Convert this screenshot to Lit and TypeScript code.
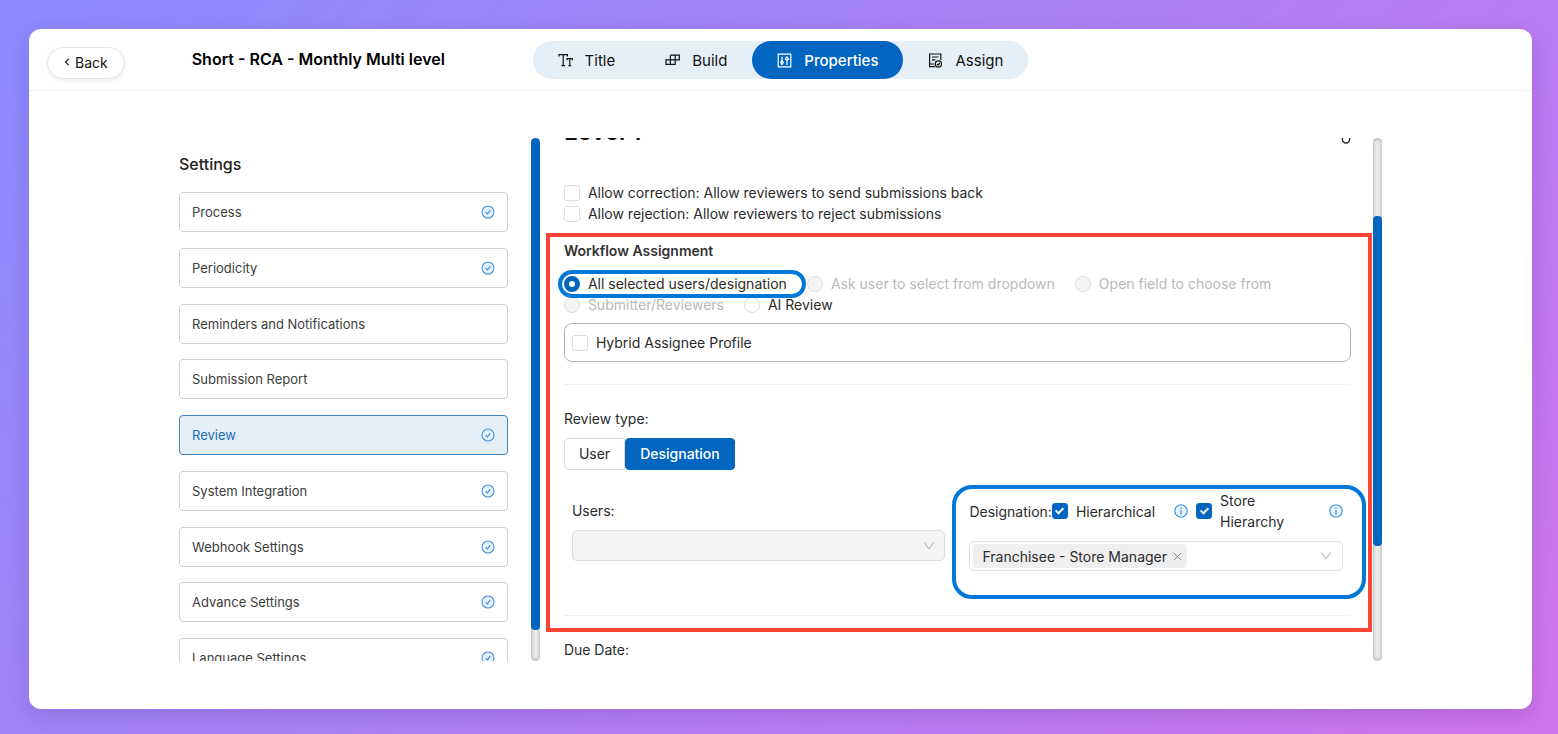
import { LitElement, html, css, svg, nothing } from "lit";
import { customElement, property } from "lit/decorators.js";
import { classMap } from "lit/directives/class-map.js";

const checkCircle = html`<svg class="check" viewBox="0 0 14 14" width="14" height="14" aria-hidden="true">
  <circle cx="7" cy="7" r="6" fill="#e6f4ff" stroke="#4a90dd" stroke-width="1.1" />
  <path d="M4.6 7.1 6.4 8.9 9.3 5.1" fill="none" stroke="#3d86d8" stroke-width="1.1" />
</svg>`;

const infoCircle = html`<svg viewBox="0 0 14 14" width="14" height="14" role="img" aria-label="More information">
  <circle cx="7" cy="7" r="6.2" fill="#e6f4ff" stroke="#3f8ee0" stroke-width="1.1" />
  <path d="M7 6v4.4" stroke="#3f8ee0" stroke-width="1.2" />
  <circle cx="7" cy="4.1" r=".8" fill="#3f8ee0" />
</svg>`;

const chevron = html`<svg class="chevron" viewBox="0 0 12 12" width="12" height="12" aria-hidden="true">
  <path d="M1.3 2.6 6 8.9l4.7-6.3" fill="none" stroke="#bcbcbc" stroke-width="1.1" />
</svg>`;

const tabIcons = {
  title: svg`<path d="M1 3.6V1.6h8.4v2M5.2 1.6v11M3.4 12.6H7M9 7.2V5.6h5.6v1.6M11.8 5.6v7M10.4 12.6h2.8" />`,
  build: svg`<path d="M5.4 2.2h8.9v4.6H1v4.6h9.2V2.2M5.4 2.2v9.2M10.2 6.8h4.1" />`,
  properties: svg`<path d="M1.2 1.2h12.6v12.6H1.2z" /><path d="M5 3.8v4M5 11v.9M10 7v4.9" /><path d="M5 7.6 6.3 9.4 5 11 3.7 9.4z" /><path d="M10 3.8 11.6 6 10 7 8.4 6z" />`,
  assign: svg`<path d="M7 13.6H1.6V1h11.2v6M4 4h6.4M4 6.8h3.4M1.6 11h4.6" /><circle cx="10.4" cy="11" r="3.1" /><path d="m9 11 1.1 1.1 1.8-2.1" />`,
};

type TabIcon = keyof typeof tabIcons;

@customElement("app-header")
class AppHeader extends LitElement {
  private tabs: { label: string; icon: TabIcon; active?: boolean }[] = [
    { label: "Title", icon: "title" },
    { label: "Build", icon: "build" },
    { label: "Properties", icon: "properties", active: true },
    { label: "Assign", icon: "assign" },
  ];

  static styles = css`
    :host {
      display: grid;
      grid-template-columns: 1fr auto 1fr;
      align-items: center;
      padding: 12px 18px 11px;
      border-bottom: 1px solid #efefef;
    }
    .lead {
      display: flex;
      align-items: center;
      gap: 67px;
    }
    .back {
      display: flex;
      align-items: center;
      gap: 5px;
      box-sizing: border-box;
      margin-top: 6px;
      padding: 0 16px 2px;
      height: 32px;
      border: 1px solid #e4e4e4;
      border-radius: 16px;
      background: #fff;
      box-shadow: 0 2px 4px rgba(0, 0, 0, 0.06);
      color: #111;
      font: 400 14px Inter, "Noto Sans", sans-serif;
      white-space: nowrap;
    }
    h1 {
      margin: 0 0 2px;
      color: #000;
      font-size: 16px;
      font-weight: 600;
      line-height: 24px;
      white-space: nowrap;
    }
    nav {
      display: flex;
      border-radius: 19px;
      background: #e4eff8;
    }
    .tab {
      display: flex;
      align-items: center;
      gap: 12px;
      height: 38px;
      padding: 0 25px;
      border-radius: 19px;
      color: #111;
      font-size: 15px;
      text-decoration: none;
    }
    .tab.active {
      background: #0265c0;
      color: #fff;
      font-weight: 500;
    }
    .tab svg {
      fill: none;
      stroke: currentColor;
      stroke-width: 1.2;
    }
  `;

  render() {
    return html`
      <div class="lead">
        <button class="back" type="button">
          <svg viewBox="0 0 6 8" width="6" height="8" aria-hidden="true">
            <path d="M4.8.8 1.4 4l3.4 3.2" fill="none" stroke="#111" stroke-width="1.1" />
          </svg>
          Back
        </button>
        <h1>Short - RCA - Monthly Multi level</h1>
      </div>
      <nav>
        ${this.tabs.map(
          (t) => html`<a href="#" class=${classMap({ tab: true, active: !!t.active })} aria-current=${t.active ? "page" : nothing}>
            <svg viewBox="0 0 15 15" width="15" height="15" aria-hidden="true">${tabIcons[t.icon]}</svg>${t.label}</a>`
        )}
      </nav>
    `;
  }
}

@customElement("scroll-track")
class ScrollTrack extends LitElement {
  @property({ type: Number }) from = 0;
  @property({ type: Number }) size = 100;

  static styles = css`
    :host {
      display: block;
      width: 9px;
      border-radius: 5px;
      background: #ededed;
      box-shadow: inset 0 0 4px rgba(0, 0, 0, 0.35);
      overflow: hidden;
      flex: none;
    }
    .spacer {
      flex: none;
    }
    .rail {
      display: flex;
      flex-direction: column;
      height: 100%;
    }
    .thumb {
      flex: none;
      border-radius: 4px;
      background: #0265c0;
    }
  `;

  render() {
    return html`<div class="rail">
      <div class="spacer" style="height:${this.from}%"></div>
      <div class="thumb" style="height:${this.size}%"></div>
    </div>`;
  }
}

@customElement("settings-menu")
class SettingsMenu extends LitElement {
  private items = [
    { label: "Process", done: true },
    { label: "Periodicity", done: true },
    { label: "Reminders and Notifications", done: false },
    { label: "Submission Report", done: false },
    { label: "Review", done: true, active: true },
    { label: "System Integration", done: true },
    { label: "Webhook Settings", done: true },
    { label: "Advance Settings", done: true },
    { label: "Language Settings", done: true },
  ];

  static styles = css`
    :host {
      display: flex;
      gap: 23px;
      min-height: 0;
    }
    .pane {
      flex: 1;
      min-width: 0;
      overflow: hidden;
    }
    h2 {
      margin: 14px 0 16px;
      color: #222;
      font-size: 16px;
      font-weight: 500;
      line-height: 24px;
    }
    .list {
      display: flex;
      flex-direction: column;
      justify-content: space-between;
      height: 486px;
    }
    .item {
      display: flex;
      align-items: center;
      justify-content: space-between;
      box-sizing: border-box;
      height: 40px;
      padding: 0 12px;
      border: 1px solid #cfcfcf;
      border-radius: 4px;
      color: #3c3c3c;
      font-size: 13px;
      text-decoration: none;
    }
    .item.active {
      border-color: #3d86c4;
      background: #e4eff8;
      color: #1c6db5;
    }
  `;

  render() {
    return html`
      <div class="pane">
        <h2>Settings</h2>
        <nav class="list">
          ${this.items.map(
            (i) => html`<a href="#" class=${classMap({ item: true, active: !!i.active })}>${i.label}${i.done ? checkCircle : nothing}</a>`
          )}
        </nav>
      </div>
      <scroll-track .from=${0} .size=${94}></scroll-track>
    `;
  }
}

@customElement("review-panel")
class ReviewPanel extends LitElement {
  static styles = css`
    :host {
      display: flex;
      min-height: 0;
      color: #2b2b2b;
      font-size: 14px;
      line-height: 21px;
    }
    .pane {
      flex: 1;
      min-width: 0;
      overflow: hidden;
      padding: 0 22px 0 24px;
    }
    .head {
      display: flex;
      align-items: flex-end;
      justify-content: space-between;
      height: 32px;
      margin-top: -22px;
      margin-bottom: 34px;
    }
    .head h2 {
      margin: 0;
      color: #111;
      font-size: 24px;
      font-weight: 600;
      line-height: 32px;
    }
    .head svg {
      margin-bottom: 4px;
    }
    .choices {
      display: flex;
      flex-wrap: wrap;
      column-gap: 20px;
    }
    label {
      display: flex;
      align-items: center;
      gap: 8px;
    }
    label.off {
      color: #b9b9b9;
    }
    input[type="checkbox"],
    input[type="radio"] {
      appearance: none;
      display: grid;
      place-items: center;
      flex: none;
      box-sizing: border-box;
      width: 16px;
      height: 16px;
      margin: 0;
      border: 1px solid #dedede;
      border-radius: 3px;
      background: #fff;
    }
    input[type="radio"] {
      border-radius: 50%;
    }
    input:disabled {
      background: #f4f4f4;
    }
    input[type="radio"]:checked {
      border: 5px solid #0265c0;
    }
    input[type="checkbox"]:checked {
      border-color: #0265c0;
      background: #0265c0;
    }
    input[type="checkbox"]:checked::after {
      content: "";
      width: 3px;
      height: 6px;
      margin-bottom: 2px;
      border: solid #fff;
      border-width: 0 2px 2px 0;
      rotate: 45deg;
    }
    .assignment {
      position: relative;
      margin-top: 16px;
      padding-bottom: 23px;
    }
    .mark {
      position: absolute;
      border: 4px solid #0078d9;
      pointer-events: none;
    }
    .mark.section {
      inset: -7px -21px 7px -18px;
      border-color: #fb4434;
    }
    .mark.pill {
      inset: -3px -19px -4px -6px;
      border-radius: 14px;
    }
    .mark.box {
      inset: -5px -23px -28px -17px;
      border-radius: 20px;
    }
    .marked {
      position: relative;
    }
    h3 {
      margin: 0 0 12px;
      color: #333;
      font-size: 14px;
      font-weight: 600;
      line-height: 21px;
    }
    .hybrid {
      margin: 8px 0 22px;
      padding: 8px 7px;
      border: 1px solid #b3b3b3;
      border-radius: 8px;
    }
    hr {
      margin: 0;
      border: 0;
      border-top: 1px solid #efefef;
    }
    .caption {
      margin: 23px 0 9px;
    }
    .segmented {
      display: flex;
    }
    .segmented button {
      box-sizing: border-box;
      height: 32px;
      padding: 0 14px 2px;
      border: 1px solid #dcdcdc;
      border-radius: 5px 0 0 5px;
      background: #fff;
      color: #2b2b2b;
      font: 400 14px Inter, "Noto Sans", sans-serif;
    }
    .segmented button.on {
      border-color: #0265c0;
      border-radius: 4px;
      background: #0265c0;
      color: #fff;
      font-weight: 500;
    }
    .fields {
      display: grid;
      grid-template-columns: 1fr 1fr;
      gap: 24px;
      padding: 20px 8px 44px;
    }
    .users {
      display: grid;
      align-content: start;
      gap: 9px;
      padding-top: 10px;
    }
    .select {
      display: grid;
      align-items: center;
    }
    .select select,
    .select .chevron {
      grid-area: 1 / 1;
    }
    .select .chevron {
      justify-self: end;
      margin-right: 10px;
    }
    select {
      appearance: none;
      box-sizing: border-box;
      width: 100%;
      height: 31px;
      border: 1px solid #dcdcdc;
      border-radius: 5px;
      background: #f4f4f4;
    }
    select:disabled {
      opacity: 1;
    }
    .designation {
      display: grid;
      gap: 9px;
    }
    .options {
      display: flex;
      align-items: center;
    }
    .options svg {
      flex: none;
    }
    .options .store {
      flex: 1;
      margin-left: 8px;
    }
    .options .store span {
      width: min-content;
    }
    .options .info {
      display: flex;
      margin-left: 19px;
    }
    .combo {
      display: flex;
      align-items: center;
      box-sizing: border-box;
      height: 30px;
      padding: 0 10px 0 3px;
      border: 1px solid #e0e0e0;
      border-radius: 5px;
    }
    .tag {
      display: flex;
      align-items: center;
      flex: none;
      gap: 6px;
      height: 24px;
      padding: 0 5px 0 9px;
      border-radius: 4px;
      background: #efefef;
    }
    .tag button {
      display: flex;
      padding: 0;
      border: 0;
      background: none;
    }
    .combo input {
      flex: 1;
      min-width: 0;
      border: 0;
      background: none;
      outline: none;
    }
    .due {
      margin: 0;
    }
  `;

  render() {
    return html`
      <div class="pane">
        <div class="head">
          <h2>Level 1</h2>
          <svg viewBox="0 0 10 16" width="10" height="16" aria-hidden="true">
            <path d="M1.4 4v7.4a3.6 3.6 0 0 0 7.2 0V4" fill="none" stroke="#222" stroke-width="1.3" />
          </svg>
        </div>
        <label><input type="checkbox" />Allow correction: Allow reviewers to send submissions back</label>
        <label><input type="checkbox" />Allow rejection: Allow reviewers to reject submissions</label>

        <section class="assignment">
          <h3>Workflow Assignment</h3>
          <div class="choices">
            <label class="marked"><input type="radio" name="mode" checked />All selected users/designation<span class="mark pill"></span></label>
            <label class="off"><input type="radio" name="mode" disabled />Ask user to select from dropdown</label>
            <label class="off"><input type="radio" name="mode" disabled />Open field to choose from</label>
            <label class="off"><input type="radio" name="mode" disabled />Submitter/Reviewers</label>
            <label><input type="radio" name="mode" />AI Review</label>
          </div>
          <div class="hybrid">
            <label><input type="checkbox" />Hybrid Assignee Profile</label>
          </div>
          <hr />
          <p class="caption">Review type:</p>
          <div class="segmented">
            <button type="button">User</button>
            <button type="button" class="on" aria-pressed="true">Designation</button>
          </div>
          <div class="fields">
            <div class="users">
              <label for="users">Users:</label>
              <div class="select"><select id="users" disabled></select>${chevron}</div>
            </div>
            <div class="designation marked">
              <div class="options">
                <label for="designation">Designation:</label>
                <label><input type="checkbox" checked />Hierarchical</label>
                <span class="info">${infoCircle}</span>
                <label class="store"><input type="checkbox" checked /><span>Store Hierarchy</span></label>
                ${infoCircle}
              </div>
              <div class="combo">
                <span class="tag">Franchisee - Store Manager
                  <button type="button" aria-label="Remove Franchisee - Store Manager">
                    <svg viewBox="0 0 9 9" width="9" height="9"><path d="m.8.8 7.4 7.4M8.2.8.8 8.2" stroke="#8c8c8c" fill="none" /></svg>
                  </button>
                </span>
                <input id="designation" type="text" role="combobox" aria-expanded="false" />
                ${chevron}
              </div>
              <span class="mark box"></span>
            </div>
          </div>
          <hr />
          <span class="mark section"></span>
        </section>
        <p class="due">Due Date:</p>
      </div>
      <scroll-track .from=${15} .size=${63}></scroll-track>
    `;
  }
}

@customElement("app-root")
class AppRoot extends LitElement {
  static styles = css`
    :host {
      display: flex;
      box-sizing: border-box;
      height: 100vh;
      padding: 29px 26px 25px 29px;
      background: linear-gradient(135deg, #8b8bff, #cf74eb);
      font-family: Inter, "Noto Sans", sans-serif;
    }
    .card {
      flex: 1;
      display: flex;
      flex-direction: column;
      min-width: 0;
      border-radius: 12px;
      background: #fff;
      box-shadow: 0 6px 20px rgba(40, 20, 90, 0.16);
    }
    main {
      flex: 1;
      display: grid;
      grid-template-columns: 3fr 7fr;
      grid-template-rows: minmax(0, 1fr);
      min-height: 0;
      padding: 47px 150px 48px;
    }
  `;

  render() {
    return html`
      <div class="card">
        <app-header></app-header>
        <main>
          <settings-menu></settings-menu>
          <review-panel></review-panel>
        </main>
      </div>
    `;
  }
}
